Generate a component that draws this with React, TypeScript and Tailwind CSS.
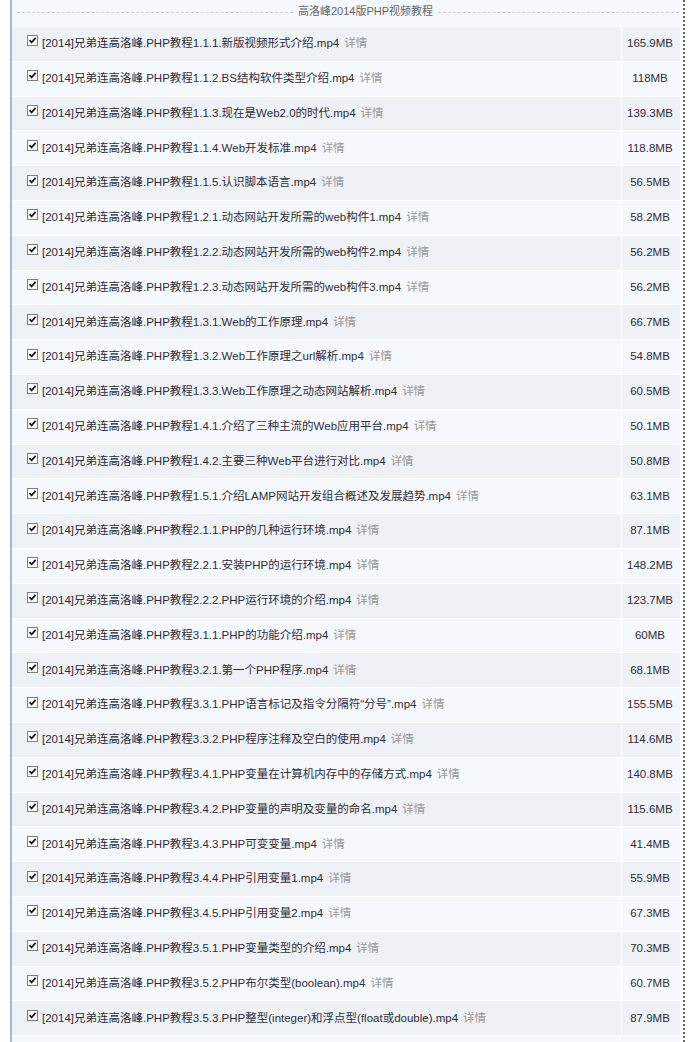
const files = [
  ['1.1.1.新版视频形式介绍', '165.9MB'],
  ['1.1.2.BS结构软件类型介绍', '118MB'],
  ['1.1.3.现在是Web2.0的时代', '139.3MB'],
  ['1.1.4.Web开发标准', '118.8MB'],
  ['1.1.5.认识脚本语言', '56.5MB'],
  ['1.2.1.动态网站开发所需的web构件1', '58.2MB'],
  ['1.2.2.动态网站开发所需的web构件2', '56.2MB'],
  ['1.2.3.动态网站开发所需的web构件3', '56.2MB'],
  ['1.3.1.Web的工作原理', '66.7MB'],
  ['1.3.2.Web工作原理之url解析', '54.8MB'],
  ['1.3.3.Web工作原理之动态网站解析', '60.5MB'],
  ['1.4.1.介绍了三种主流的Web应用平台', '50.1MB'],
  ['1.4.2.主要三种Web平台进行对比', '50.8MB'],
  ['1.5.1.介绍LAMP网站开发组合概述及发展趋势', '63.1MB'],
  ['2.1.1.PHP的几种运行环境', '87.1MB'],
  ['2.2.1.安装PHP的运行环境', '148.2MB'],
  ['2.2.2.PHP运行环境的介绍', '123.7MB'],
  ['3.1.1.PHP的功能介绍', '60MB'],
  ['3.2.1.第一个PHP程序', '68.1MB'],
  ['3.3.1.PHP语言标记及指令分隔符“分号”', '155.5MB'],
  ['3.3.2.PHP程序注释及空白的使用', '114.6MB'],
  ['3.4.1.PHP变量在计算机内存中的存储方式', '140.8MB'],
  ['3.4.2.PHP变量的声明及变量的命名', '115.6MB'],
  ['3.4.3.PHP可变变量', '41.4MB'],
  ['3.4.4.PHP引用变量1', '55.9MB'],
  ['3.4.5.PHP引用变量2', '67.3MB'],
  ['3.5.1.PHP变量类型的介绍', '70.3MB'],
  ['3.5.2.PHP布尔类型(boolean)', '60.7MB'],
  ['3.5.3.PHP整型(integer)和浮点型(float或double)', '87.9MB'],
]

function CheckMark() {
  return (
    <span className="inline-flex w-[11px] h-[11px] shrink-0 items-center justify-center border border-[#7d7d7d] bg-white -translate-y-[3px]">
      <svg viewBox="0 0 9 9" className="w-[9px] h-[9px]">
        <path d="M1.5 4.2 L3.6 6.4 L7.6 1.8" fill="none" stroke="#1c1c1c" strokeWidth="1.8" />
      </svg>
    </span>
  )
}

export default function App() {
  return (
    <div
      className="w-[690px] h-[1042px] overflow-hidden bg-white text-[11.5px] text-[#2e2e3a]"
      style={{ fontFamily: '"Liberation Sans", "Noto Sans CJK SC", sans-serif' }}
    >
      <div className="ml-[10px] w-[675px] h-full border-r-2 border-dotted border-[#666] bg-white">
        <div className="w-[670px] h-full border-l-2 border-[#a7b7d1] bg-[#f5f8fc]">
          {/* legend */}
          <div className="flex items-center h-[25px] pl-[5px] pr-[1px]">
            <div className="w-[276px] border-t border-dashed border-[#cfd3d8]" />
            <span className="px-[5px] text-[#666] text-[11px] -translate-y-[1px]">高洛峰2014版PHP视频教程</span>
            <div className="flex-1 border-t border-dashed border-[#cfd3d8]" />
          </div>
          <div className="h-[2px]" />
          {files.map(([name, size], i) => (
            <div
              key={name}
              className={`flex h-[34.8px] border-b border-white ${i % 2 === 0 ? 'bg-[#eef1f5]' : 'bg-[#f5f8fc]'}`}
            >
              <div className="flex-1 flex items-center pl-[15px] gap-[4px]">
                <CheckMark />
                <span className="whitespace-nowrap">
                  [2014]兄弟连高洛峰.PHP教程{name}.mp4
                  <span className="ml-[5px] text-[#9a9a9a]">详情</span>
                </span>
              </div>
              <div className="w-[57px] mr-[2px] border-l border-white flex items-center justify-center">{size}</div>
            </div>
          ))}
        </div>
      </div>
    </div>
  )
}
